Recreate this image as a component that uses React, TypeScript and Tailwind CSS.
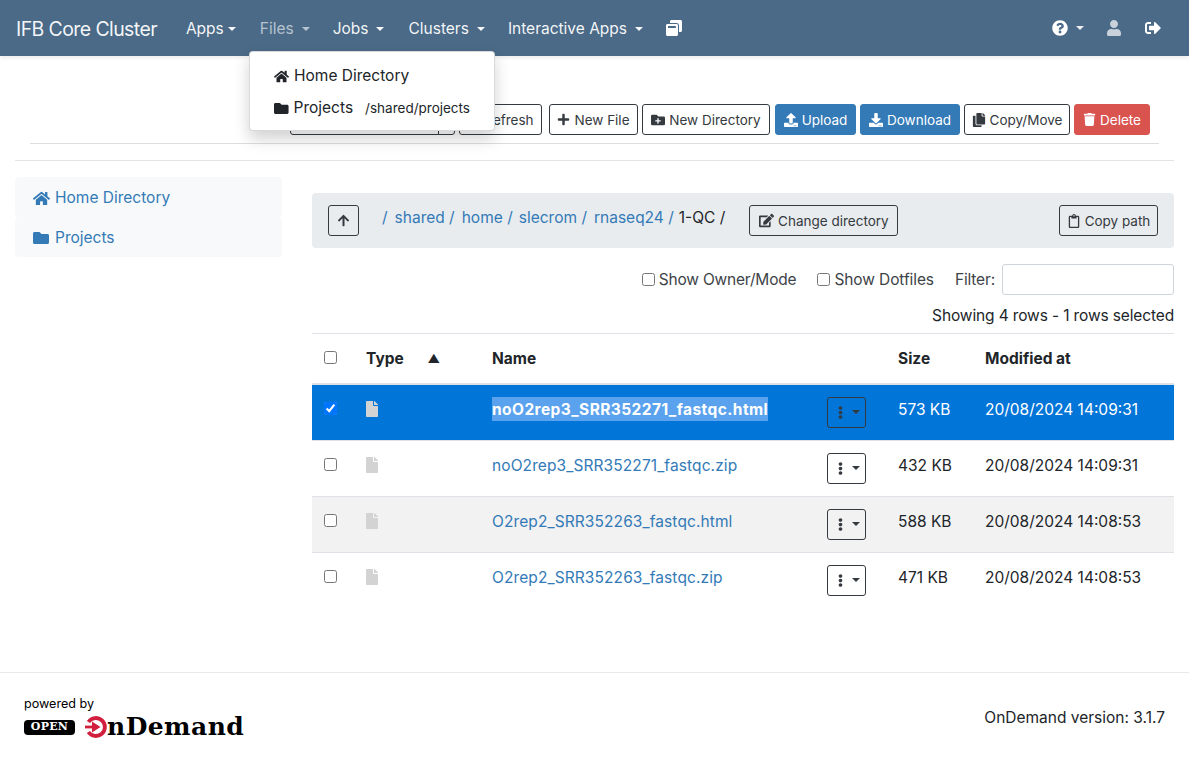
import type { ReactNode } from 'react';
import {
    FaArrowUp, FaCopy, FaDownload, FaEdit, FaEllipsisV, FaFile, FaFolder, FaFolderPlus, FaHome,
    FaPlus, FaQuestionCircle, FaRegClipboard, FaSignOutAlt, FaSyncAlt, FaTerminal, FaTrash, FaUpload, FaUser, FaWindowRestore,
} from 'react-icons/fa';

function Caret({ className = '' }: { className?: string }) {
    return <span className={`inline-block w-0 h-0 border-x-[4.8px] border-t-[4.8px] border-x-transparent border-t-current ${className}`} />;
}

function NavItem({ label, muted, tight, pull }: { label: string; muted?: boolean; tight?: boolean; pull?: boolean }) {
    return (
        <a className={`flex items-center pl-2 pt-0.5 ${pull ? 'pr-[15px]' : 'pr-4'} ${muted ? 'text-white/60' : 'text-white/95'}`}>
            {label}
            <Caret className={tight ? 'ml-1' : 'ml-2'} />
        </a>
    );
}

function Btn({ children, color = 'outline', className = '' }: { children: ReactNode; color?: 'outline' | 'ghost' | 'blue' | 'red'; className?: string }) {
    const colors = {
        outline: 'border-[#343a40] text-[#343a40] bg-white',
        ghost: 'border-[#343a40] text-[#343a40] bg-transparent',
        blue: 'border-[#337ab7] bg-[#337ab7] text-white',
        red: 'border-[#d9534f] bg-[#d9534f] text-white',
    };
    return (
        <button className={`flex h-[31px] items-center justify-center gap-1 rounded-[3px] border text-[13.5px] whitespace-nowrap ${colors[color]} ${className}`}>
            {children}
        </button>
    );
}

function Crumb({ label, className = 'mr-[7px]' }: { label: string; className?: string }) {
    return <a className={`text-[#337ab7] ${className}`}>{label} /</a>;
}

const rows = [
    { name: 'noO2rep3_SRR352271_fastqc.html', size: '573 KB', date: '20/08/2024 14:09:31', selected: true },
    { name: 'noO2rep3_SRR352271_fastqc.zip', size: '432 KB', date: '20/08/2024 14:09:31' },
    { name: 'O2rep2_SRR352263_fastqc.html', size: '588 KB', date: '20/08/2024 14:08:53', striped: true },
    { name: 'O2rep2_SRR352263_fastqc.zip', size: '471 KB', date: '20/08/2024 14:08:53' },
];

export default function App() {
    return (
        <div className="relative min-h-[761px] bg-white font-['Inter','Liberation_Sans',sans-serif] text-[15.5px] leading-6 text-[#212529]">
            <nav className="flex h-14 items-center bg-[#4b6a87] pl-4 pr-[28px] shadow-[0_2px_4px_rgba(0,0,0,0.08)]">
                <span className="mr-[21px] pt-0.5 text-[19.5px] tracking-[-0.6px] text-white/95">IFB Core Cluster</span>
                <div className="flex items-center">
                    <NavItem label="Apps" tight />
                    <NavItem label="Files" muted pull />
                    <NavItem label="Jobs" />
                    <NavItem label="Clusters" pull />
                    <NavItem label="Interactive Apps" />
                    <a className="ml-[7px] text-white"><FaWindowRestore size={16} /></a>
                </div>
                <div className="ml-auto flex items-center text-white">
                    <FaQuestionCircle size={16} />
                    <Caret className="ml-2 text-white/90" />
                    <FaUser size={16} className="ml-[22px] text-white/70" />
                    <FaSignOutAlt size={16} className="ml-[23px]" />
                </div>
            </nav>

            {/* files dropdown */}
            <div className="absolute left-[249px] top-[51px] z-10 h-[80px] w-[246px] rounded border border-black/15 bg-white py-2 shadow-[0_8px_16px_rgba(0,0,0,0.18)]">
                <a className="flex h-8 items-center px-6"><FaHome size={15} className="mr-[5px]" />Home Directory</a>
                <a className="flex h-8 items-center px-6"><FaFolder size={15} className="mr-[5px]" />Projects<span className="ml-3 text-[13.5px]">/shared/projects</span></a>
            </div>

            <div className="mx-[15px] pt-12">
                <div className="mx-[15px] border-b border-[#dedede] pb-2">
                    <div className="flex justify-end gap-1 pr-[9px]">
                        <div className="flex">
                            <Btn className="w-[149px] rounded-r-none"><FaTerminal size={13} />Open in Terminal</Btn>
                            <Btn className="-ml-px w-[17px] rounded-l-none"><Caret /></Btn>
                        </div>
                        <Btn className="w-[83px]"><FaSyncAlt size={13} />Refresh</Btn>
                        <Btn className="ml-[3px] w-[89px]"><FaPlus size={13} />New File</Btn>
                        <Btn className="w-[128px]"><FaFolderPlus size={14} />New Directory</Btn>
                        <Btn color="blue" className="ml-px w-[81px]"><FaUpload size={14} />Upload</Btn>
                        <Btn color="blue" className="w-[100px]"><FaDownload size={14} />Download</Btn>
                        <Btn className="w-[106px]"><FaCopy size={14} />Copy/Move</Btn>
                        <Btn color="red" className="w-[76px]"><FaTrash size={13} />Delete</Btn>
                    </div>
                </div>
                <div className="mt-4 border-b border-[#e4e4e4]" />

                <div className="mt-4 flex">
                    <aside className="w-[267px] shrink-0">
                        <a className="flex h-10 items-center rounded bg-[#f8f9fa] px-[18px] pt-0.5 text-[#337ab7]"><FaHome size={17} className="mr-[5px]" />Home Directory</a>
                        <a className="flex h-10 items-center rounded bg-[#f8f9fa] px-[18px] pt-0.5 text-[#337ab7]"><FaFolder size={16} className="mr-[6px]" />Projects</a>
                    </aside>

                    <main className="ml-[30px] mt-4 min-w-0 flex-1">
                        <div className="flex h-[55px] items-center rounded bg-[#e9ecef] px-4">
                            <Btn color="ghost" className="w-[31px]"><FaArrowUp size={13} /></Btn>
                            <div className="mb-[6px] ml-[23px] flex">
                                <span className="mr-[7px] text-[#337ab7]">/</span>
                                <Crumb label="shared" />
                                <Crumb label="home" className="mr-[6px]" />
                                <Crumb label="slecrom" />
                                <Crumb label="rnaseq24" className="mr-[5px]" />
                                <span>1-QC /</span>
                            </div>
                            <Btn color="ghost" className="ml-6 w-[149px]"><FaEdit size={15} />Change directory</Btn>
                            <Btn color="ghost" className="ml-auto w-[99px]"><FaRegClipboard size={14} />Copy path</Btn>
                        </div>

                        <div className="mt-4 flex h-[31px] items-center justify-end text-[#3d4348]">
                            <label className="flex items-center tracking-[-0.2px]"><input type="checkbox" className="mr-1" />Show Owner/Mode</label>
                            <label className="ml-[21px] flex items-center tracking-[-0.1px]"><input type="checkbox" className="mr-1" />Show Dotfiles</label>
                            <span className="ml-[21px] mr-[7px] tracking-[-0.15px]">Filter:</span>
                            <input className="h-[31px] w-[172px] rounded-[3px] border border-[#ced4da]" />
                        </div>
                        <div className="mt-[9px] text-right tracking-[-0.13px]">Showing 4 rows - 1 rows selected</div>

                        <table className="mt-[5px] w-full table-fixed border-collapse">
                            <colgroup>
                                <col className="w-[42px]" />
                                <col className="w-[126px]" />
                                <col className="w-[335px]" />
                                <col className="w-[71px]" />
                                <col className="w-[87px]" />
                                <col />
                            </colgroup>
                            <thead>
                                <tr className="h-[50px] border-y border-b-2 border-y-[#dee2e6] text-left font-bold">
                                    <th className="pb-[2px] pl-3"><input type="checkbox" className="block" /></th>
                                    <th className="px-3 pt-0.5">
                                        <span className="flex items-center justify-between pr-[28px]">Type<span className="text-[12px]">▲</span></span>
                                    </th>
                                    <th className="px-3 pt-0.5">Name</th>
                                    <th />
                                    <th className="px-3 pt-0.5">Size</th>
                                    <th className="px-3 pt-0.5">Modified at</th>
                                </tr>
                            </thead>
                            <tbody>
                                {rows.map(row => (
                                    <tr
                                        key={row.name}
                                        className={`border-b border-[#dee2e6] last:border-b-0 ${row.selected ? 'bg-[#0275d8] text-white' : row.striped ? 'bg-[#f2f2f2]' : ''}`}
                                    >
                                        <td className="pl-3 pt-[13px] align-top"><input type="checkbox" defaultChecked={row.selected} className="mt-1 block accent-[#0075ff]" /></td>
                                        <td className="px-3 pt-[13px] align-top"><FaFile size={16} className="-ml-[2px] mt-[3px] text-[#d3d3d3]" /></td>
                                        <td className="px-3 pt-3 align-top">
                                            {row.selected
                                                ? <span className="inline-block h-6 bg-[#5aa2ee] font-bold leading-[26px] tracking-[0.43px]">{row.name}</span>
                                                : <a className="inline-block h-6 leading-[26px] tracking-[0.1px] text-[#337ab7]">{row.name}</a>}
                                        </td>
                                        <td className="py-3 pl-3">
                                            <Btn color={row.selected || row.striped ? 'ghost' : 'outline'} className="w-[39px] gap-[5px]">
                                                <FaEllipsisV size={13} />
                                                <Caret />
                                            </Btn>
                                        </td>
                                        <td className="px-3 pt-[13px] align-top">{row.size}</td>
                                        <td className="px-3 pt-[13px] align-top">{row.date}</td>
                                    </tr>
                                ))}
                            </tbody>
                        </table>
                    </main>
                </div>
            </div>

            <footer className="mt-16 flex h-[89px] items-center justify-between border-t border-[#e9e9e9] pl-6 pr-6">
                <div className="text-black">
                    <div className="pt-[2px] text-[12.6px] leading-4">powered by</div>
                    <div className="mt-[3px] flex items-center">
                        <span className="flex h-[15px] w-[51px] items-center justify-center rounded-[4px] bg-black font-['DejaVu_Serif',serif] text-[11px] font-bold tracking-wide text-white">OPEN</span>
                        <svg viewBox="0 0 22 22" className="ml-[10px] h-[22px] w-[22px]">
                            <path d="M3.4 6 A9 9 0 1 1 3.4 16" fill="none" stroke="#d31f3e" strokeWidth="3.8" />
                            <path d="M7 5.5 L15.5 11 L7 16.5 Z" fill="#d31f3e" />
                            <path d="M0 9.6 H8 V12.4 H0 Z" fill="#d31f3e" />
                        </svg>
                        <span className="font-['DejaVu_Serif',serif] text-[25px] font-bold leading-6 tracking-[0.45px]">nDemand</span>
                    </div>
                </div>
                <span className="pt-0.5">OnDemand version: 3.1.7</span>
            </footer>
        </div>
    );
}
